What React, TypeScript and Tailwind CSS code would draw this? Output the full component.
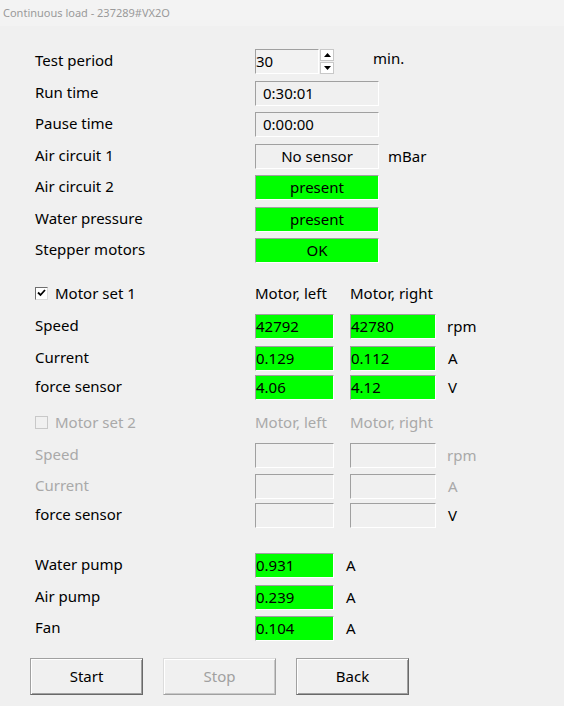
import React from 'react';

const font = { fontFamily: '"Noto Sans", "Open Sans", sans-serif' };

type BoxProps = {
  value?: string;
  green?: boolean;
  center?: boolean;
  width: string;
  indent?: boolean;
};

const Box: React.FC<BoxProps> = ({ value, green, center, width, indent }) => (
  <div
    className={`${width} h-[25px] flex items-center border border-t-[#a0a0a0] border-l-[#a0a0a0] border-r-white border-b-white leading-none ${green ? 'bg-[#00ff00]' : 'bg-[#f0f0f0]'} ${center ? 'justify-center' : indent ? 'pl-[7px]' : 'pl-0'}`}
  >
    {value}
  </div>
);

const Row: React.FC<{ label: string; mt: string; children?: React.ReactNode; muted?: boolean }> = ({
  label,
  mt,
  children,
  muted,
}) => (
  <div className={`flex items-center h-[25px] ${mt}`}>
    <div className={`w-[220px] pb-[2px] ${muted ? 'text-[#a9a9a9]' : 'text-black'}`}>{label}</div>
    {children}
  </div>
);

const Checkbox: React.FC<{ checked?: boolean; disabled?: boolean }> = ({ checked, disabled }) => (
  <div
    className={`w-[13px] h-[13px] flex items-center justify-center border ${disabled ? 'border-[#c8c8c8] bg-[#f0f0f0]' : 'border-t-[#6e6e6e] border-l-[#6e6e6e] border-r-[#dcdcdc] border-b-[#dcdcdc] bg-white'}`}
  >
    {checked && (
      <svg width="9" height="8" viewBox="0 0 9 8">
        <path d="M1 3.5 L3.5 6 L8 1" stroke="#000" strokeWidth="1.8" fill="none" />
      </svg>
    )}
  </div>
);

const Button: React.FC<{ label: string; disabled?: boolean }> = ({ label, disabled }) => (
  <button
    className={`w-[113px] h-[37px] bg-[#f0f0f0] border ${disabled ? 'border-t-[#dcdcdc] border-l-[#dcdcdc] border-r-[#a0a0a0] border-b-[#a0a0a0] text-[#a0a0a0] shadow-[inset_1px_1px_0_#fff,inset_-1px_-1px_0_#c8c8c8]' : 'border-t-[#a0a0a0] border-l-[#a0a0a0] border-r-[#696969] border-b-[#696969] text-black shadow-[inset_1px_1px_0_#fff,inset_-1px_-1px_0_#a0a0a0]'}`}
  >
    {label}
  </button>
);

const App: React.FC = () => {
  return (
    <div className="w-[564px] h-[706px] bg-[#f0f0f0] text-[15px] overflow-hidden" style={font}>
      {/* Title bar */}
      <div className="h-[26px] bg-[#f3f3f3] flex items-center pl-[3px] text-[11px] text-[#9a9a9a]">
        Continuous load - 237289#VX2O
      </div>

      <div className="pl-[35px]">
        {/* General section */}
        <Row label="Test period" mt="mt-[23px]">
          <div className="w-[64px] h-[25px] flex items-center border border-t-[#a0a0a0] border-l-[#a0a0a0] border-r-white border-b-white bg-[#f2f2f2] pl-0">
            30
          </div>
          <div className="ml-[1px] w-[14px] h-[25px] flex flex-col gap-[1px]">
            <div className="h-[12px] bg-white border border-[#c8c8c8] flex items-center justify-center">
              <svg width="7" height="4" viewBox="0 0 7 4">
                <path d="M0 4 L3.5 0 L7 4 Z" fill="#000" />
              </svg>
            </div>
            <div className="h-[12px] bg-white border border-[#c8c8c8] flex items-center justify-center">
              <svg width="7" height="4" viewBox="0 0 7 4">
                <path d="M0 0 L3.5 4 L7 0 Z" fill="#000" />
              </svg>
            </div>
          </div>
          <div className="ml-[39px] -mt-[6px]">min.</div>
        </Row>
        <Row label="Run time" mt="mt-[7px]">
          <Box width="w-[124px]" value="0:30:01" indent />
        </Row>
        <Row label="Pause time" mt="mt-[6px]">
          <Box width="w-[124px]" value="0:00:00" indent />
        </Row>
        <Row label="Air circuit 1" mt="mt-[7px]">
          <Box width="w-[124px]" value="No sensor" center />
          <div className="ml-[9px]">mBar</div>
        </Row>
        <Row label="Air circuit 2" mt="mt-[6px]">
          <Box width="w-[124px]" value="present" center green />
        </Row>
        <Row label="Water pressure" mt="mt-[7px]">
          <Box width="w-[124px]" value="present" center green />
        </Row>
        <Row label="Stepper motors" mt="mt-[6px]">
          <Box width="w-[124px]" value="OK" center green />
        </Row>

        {/* Motor set 1 */}
        <div className="flex items-center h-[20px] mt-[20px]">
          <div className="w-[220px] flex items-center gap-[7px]">
            <Checkbox checked />
            <span>Motor set 1</span>
          </div>
          <div className="w-[95px]">Motor, left</div>
          <div>Motor, right</div>
        </div>
        <Row label="Speed" mt="mt-[11px]">
          <Box width="w-[79px]" value="42792" green />
          <div className="ml-[16px]"><Box width="w-[86px]" value="42780" green /></div>
          <div className="ml-[11px]">rpm</div>
        </Row>
        <Row label="Current" mt="mt-[7px]">
          <Box width="w-[79px]" value="0.129" green />
          <div className="ml-[16px]"><Box width="w-[86px]" value="0.112" green /></div>
          <div className="ml-[12px]">A</div>
        </Row>
        <Row label="force sensor" mt="mt-[4px]">
          <Box width="w-[79px]" value="4.06" green />
          <div className="ml-[16px]"><Box width="w-[86px]" value="4.12" green /></div>
          <div className="ml-[12px]">V</div>
        </Row>

        {/* Motor set 2 (disabled) */}
        <div className="flex items-center h-[20px] mt-[12px] text-[#a9a9a9]">
          <div className="w-[220px] flex items-center gap-[7px]">
            <Checkbox disabled />
            <span>Motor set 2</span>
          </div>
          <div className="w-[95px]">Motor, left</div>
          <div>Motor, right</div>
        </div>
        <Row label="Speed" mt="mt-[11px]" muted>
          <Box width="w-[79px]" />
          <div className="ml-[16px]"><Box width="w-[86px]" /></div>
          <div className="ml-[11px] text-[#a9a9a9]">rpm</div>
        </Row>
        <Row label="Current" mt="mt-[6px]" muted>
          <Box width="w-[79px]" />
          <div className="ml-[16px]"><Box width="w-[86px]" /></div>
          <div className="ml-[12px] text-[#a9a9a9]">A</div>
        </Row>
        <Row label="force sensor" mt="mt-[4px]">
          <Box width="w-[79px]" />
          <div className="ml-[16px]"><Box width="w-[86px]" /></div>
          <div className="ml-[12px]">V</div>
        </Row>

        {/* Pumps */}
        <Row label="Water pump" mt="mt-[25px]">
          <Box width="w-[79px]" value="0.931" green />
          <div className="ml-[12px]">A</div>
        </Row>
        <Row label="Air pump" mt="mt-[7px]">
          <Box width="w-[79px]" value="0.239" green />
          <div className="ml-[12px]">A</div>
        </Row>
        <Row label="Fan" mt="mt-[6px]">
          <Box width="w-[79px]" value="0.104" green />
          <div className="ml-[12px]">A</div>
        </Row>
      </div>

      {/* Buttons */}
      <div className="flex gap-[20px] pl-[30px] mt-[17px]">
        <Button label="Start" />
        <Button label="Stop" disabled />
        <Button label="Back" />
      </div>
    </div>
  );
};

export default App;
